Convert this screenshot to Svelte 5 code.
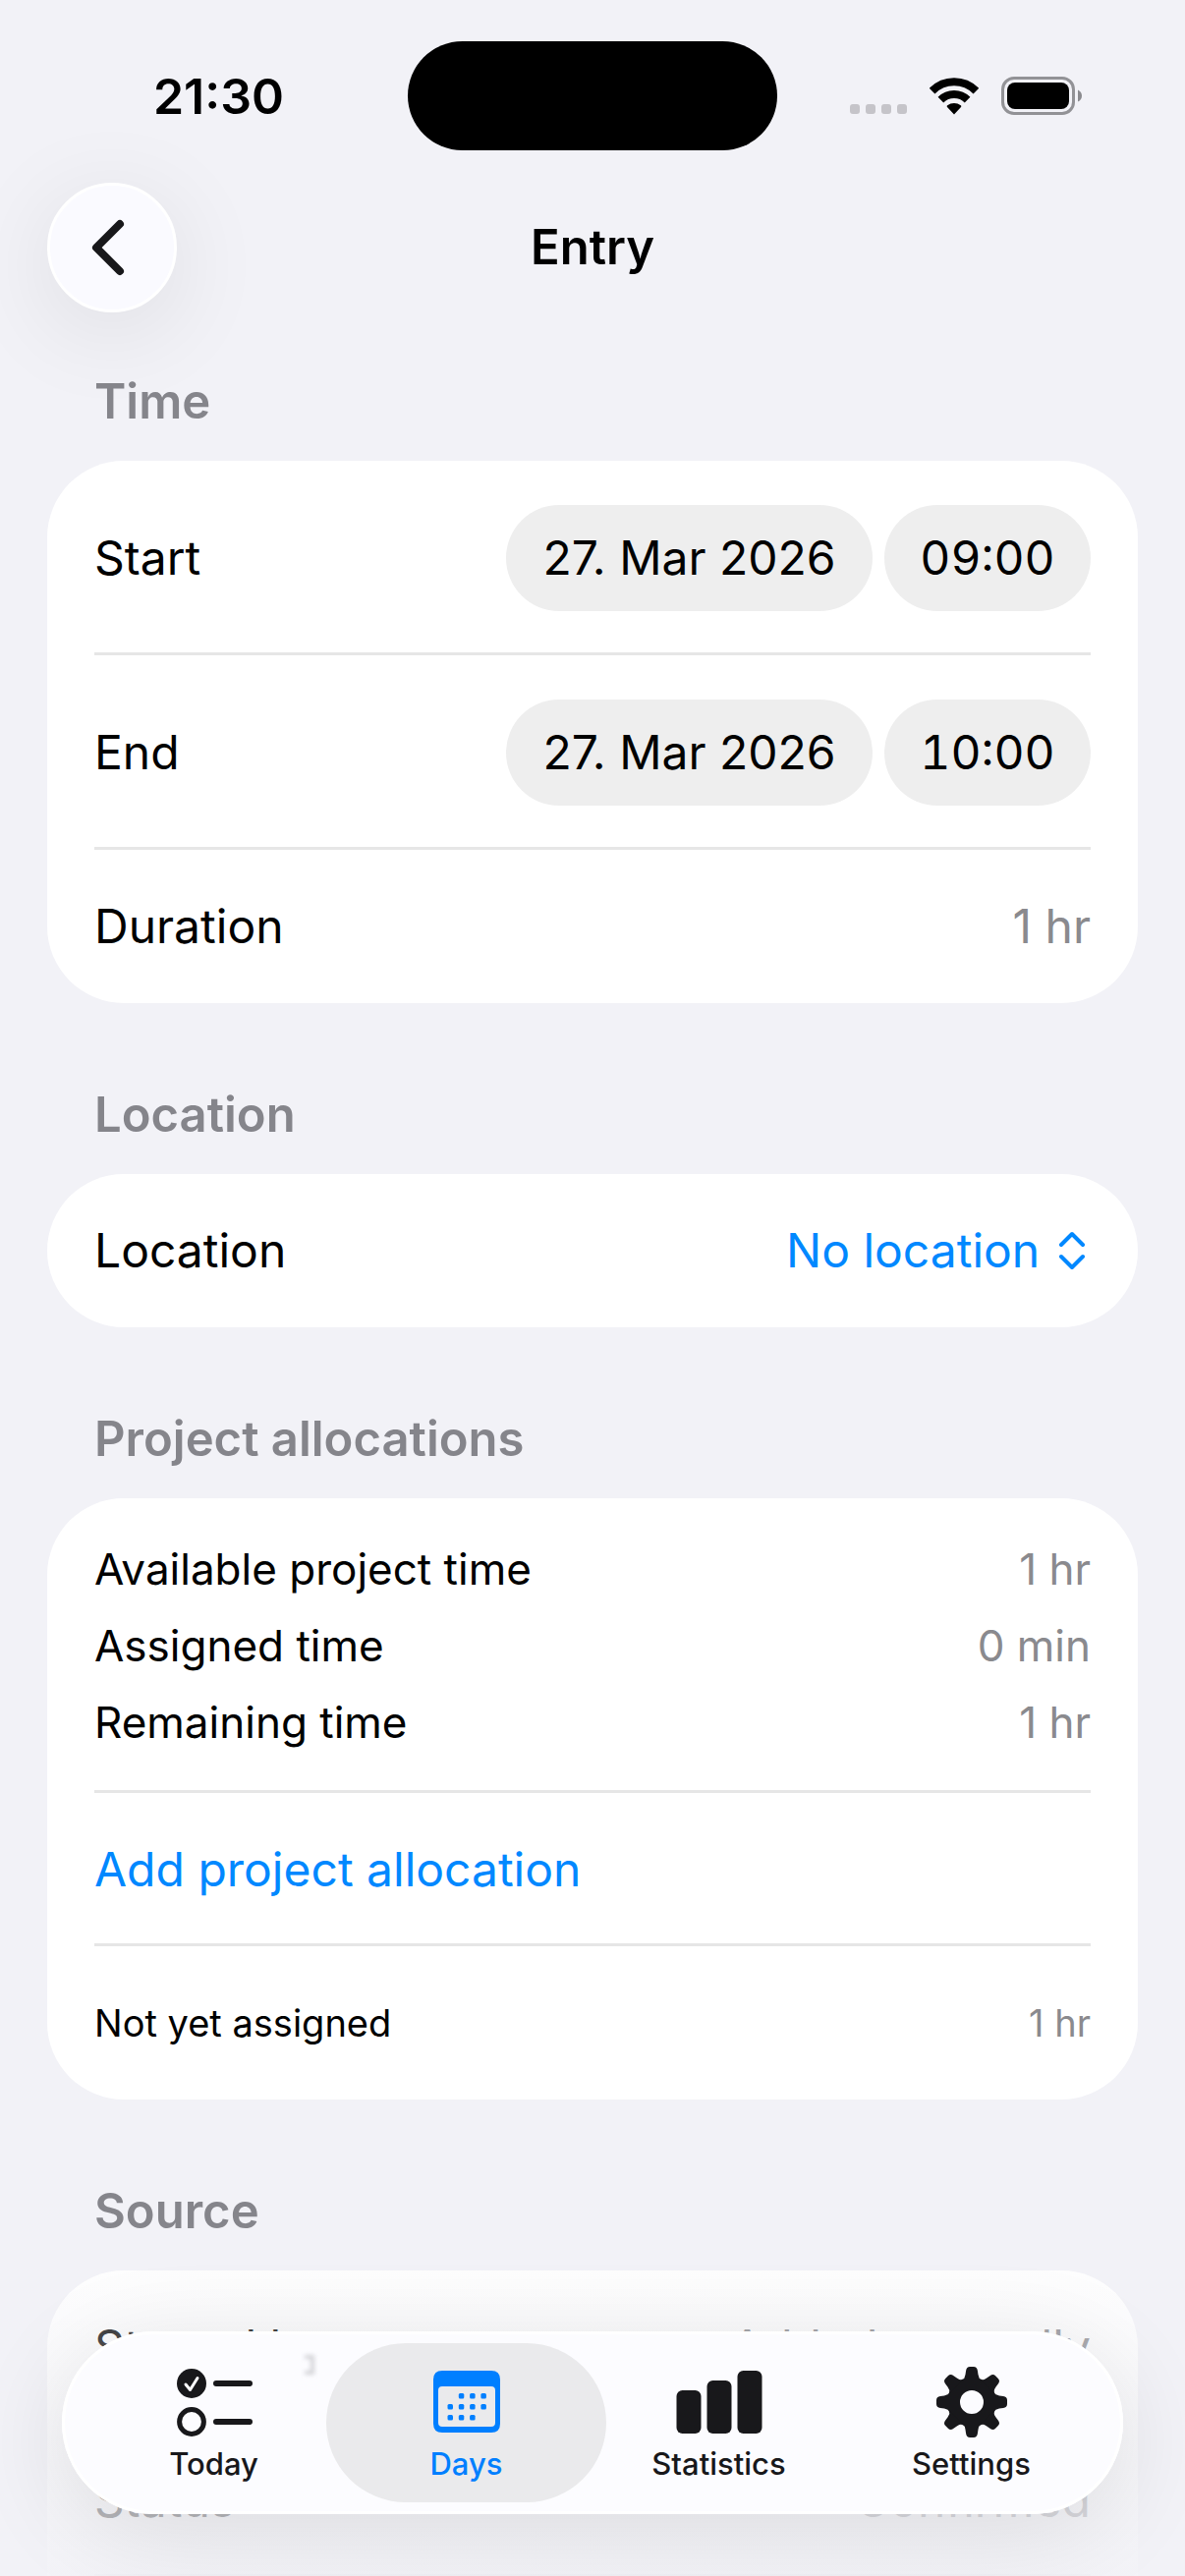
<script lang="ts">
  interface Tab {
    id: string;
    label: string;
  }

  const tabs: Tab[] = [
    { id: 'today', label: 'Today' },
    { id: 'days', label: 'Days' },
    { id: 'statistics', label: 'Statistics' },
    { id: 'settings', label: 'Settings' }
  ];

  const times = [
    { label: 'Start', date: '27. Mar 2026', time: '09:00' },
    { label: 'End', date: '27. Mar 2026', time: '10:00' }
  ];

  const totals = [
    { label: 'Available project time', value: '1 hr' },
    { label: 'Assigned time', value: '0 min' },
    { label: 'Remaining time', value: '1 hr' }
  ];

  // calendar day dots as [column, row]
  const days = [
    [1, 0], [2, 0], [3, 0],
    [0, 1], [1, 1], [2, 1], [3, 1],
    [0, 2], [1, 2], [2, 2]
  ];

  const teeth = [0, 45, 90, 135, 180, 225, 270, 315];

  let activeTab = $state('days');
  let location = $state('none');
</script>

<div class="screen">
  <header>
    <div class="status">
      <span class="status__time">21:30</span>
      <span class="status__island"></span>
      <div class="status__icons">
        <svg class="signal" viewBox="0 0 58 10" aria-hidden="true">
          {#each [0, 16, 32, 48] as x}
            <rect {x} y="0" width="10" height="10" rx="3" />
          {/each}
        </svg>
        <svg class="wifi" viewBox="0 0 50 38" aria-hidden="true">
          <path d="M2.6 13.6a31.5 31.5 0 0 1 44.8 0" />
          <path d="M11.4 22.6a19.2 19.2 0 0 1 27.2 0" />
          <path class="wifi__dot" d="M25 37.5l-7-7.4q-.9-1 .2-1.8a11 11 0 0 1 13.6 0q1.1.8.2 1.8z" />
        </svg>
        <svg class="battery" viewBox="0 0 82 39" aria-hidden="true">
          <rect class="battery__case" x="1.5" y="1.5" width="72" height="36" rx="11.5" />
          <rect x="6" y="6" width="63" height="27" rx="8" />
          <path class="battery__tip" d="M78 13.5q4 2 4 6t-4 6z" />
        </svg>
      </div>
    </div>

    <div class="navbar">
      <button class="back" type="button" aria-label="Back">
        <svg viewBox="0 0 34 58" aria-hidden="true"><path d="M29 5 5 29l24 24" /></svg>
      </button>
      <h1>Entry</h1>
    </div>
  </header>

  <main>
    <section>
      <h2>Time</h2>
      <div class="card">
        {#each times as item}
          <div class="row row--tall">
            <span>{item.label}</span>
            <div class="pills">
              <button class="pill pill--date" type="button">{item.date}</button>
              <button class="pill pill--time" type="button">{item.time}</button>
            </div>
          </div>
        {/each}
        <div class="row">
          <span>Duration</span>
          <span class="value">1 hr</span>
        </div>
      </div>
    </section>

    <section>
      <h2>Location</h2>
      <div class="card">
        <div class="row">
          <label for="location">Location</label>
          <div class="picker">
            <select id="location" bind:value={location}>
              <option value="none">No location</option>
            </select>
            <svg viewBox="0 0 28 40" aria-hidden="true">
              <path d="M3 14 14 3l11 11M3 26l11 11 11-11" />
            </svg>
          </div>
        </div>
      </div>
    </section>

    <section>
      <h2>Project allocations</h2>
      <div class="card">
        <div class="totals">
          {#each totals as total}
            <div class="total">
              <span>{total.label}</span>
              <span class="value">{total.value}</span>
            </div>
          {/each}
        </div>
        <div class="row">
          <button class="link" type="button">Add project allocation</button>
        </div>
        <div class="row row--small">
          <span>Not yet assigned</span>
          <span class="value">1 hr</span>
        </div>
      </div>
    </section>

    <section>
      <h2>Source</h2>
      <div class="card card--open">
        <div class="row">
          <span>Started by</span>
          <span class="value">Added manually</span>
        </div>
        <div class="row">
          <span>Status</span>
          <span class="value">Confirmed</span>
        </div>
      </div>
    </section>
  </main>

  <div class="scrim"></div>

  <nav class="tabs">
    {#each tabs as tab}
      <button
        type="button"
        class="tab"
        class:tab--active={activeTab === tab.id}
        aria-current={activeTab === tab.id ? 'page' : undefined}
        onclick={() => (activeTab = tab.id)}
      >
        <svg class="tab__icon" viewBox="0 0 88 72" aria-hidden="true">
          {#if tab.id === 'today'}
            <circle cx="21" cy="17" r="15" />
            <path class="check" d="M15 18l4.5 5.500 7.500-12" />
            <circle class="outline" cx="21" cy="56" r="12.4" />
            <rect x="43" y="14" width="40" height="6" rx="3" />
            <rect x="43" y="53" width="40" height="6" rx="3" />
          {:else if tab.id === 'days'}
            <path
              fill-rule="evenodd"
              d="M19 4h50q9 0 9 9v45q0 9-9 9h-50q-9 0-9-9v-45q0-9 9-9zM19 20q-4 0-4 4v33q0 4 4 4h50q4 0 4-4v-33q0-4-4-4z"
            />
            {#each days as [col, row]}
              <rect x={24.5 + col * 11.3} y={27 + row * 11} width="5.5" height="5.5" rx="1.5" />
            {/each}
          {:else if tab.id === 'statistics'}
            <rect x="0.5" y="24" width="25" height="44" rx="6" />
            <rect x="31.5" y="14" width="25" height="54" rx="6" />
            <rect x="62.5" y="4" width="25" height="64" rx="6" />
          {:else}
            <circle class="gear" cx="44" cy="36" r="18.5" />
            {#each teeth as angle}
              <path
                d="M34 14q3-2 3.5-6l.6-4q.6-4 4-4h3.800q3.400 0 4 4l.6 4q.5 4 3.500 6z"
                transform="rotate({angle} 44 36)"
              />
            {/each}
          {/if}
        </svg>
        <span>{tab.label}</span>
      </button>
    {/each}
  </nav>
</div>

<style>
  :global(body) {
    background: #f2f2f7;
  }

  .screen {
    position: relative;
    display: flex;
    flex-direction: column;
    height: 100vh;
    overflow: hidden;
    background: #f2f2f7;
    color: #000;
    font-family: Inter, 'Liberation Sans', sans-serif;
    font-size: 48px;
    line-height: 66px;
  }

  button,
  select {
    padding: 0;
    border: 0;
    background: none;
    color: inherit;
    font: inherit;
    cursor: pointer;
  }

  h1,
  h2 {
    margin: 0;
    font-size: 49px;
    font-weight: 600;
  }

  /* Status bar */
  .status {
    display: grid;
    grid-template-columns: 1fr 376px 1fr;
    align-items: center;
    padding-top: 42px;
  }

  .status__time {
    padding-left: 30px;
    font-size: 50px;
    font-weight: 600;
    text-align: center;
  }

  .status__island {
    height: 111px;
    border-radius: 56px;
    background: #000;
  }

  .status__icons {
    display: flex;
    align-items: center;
    gap: 23px;
    padding-left: 74px;
  }

  .signal {
    width: 58px;
    height: 10px;
    margin-top: 27px;
    fill: #c5c4c9;
  }

  .wifi {
    width: 50px;
    height: 38px;
  }

  .wifi path {
    fill: none;
    stroke: #000;
    stroke-width: 8;
  }

  .wifi .wifi__dot {
    fill: #000;
    stroke: none;
  }

  .battery {
    width: 82px;
    height: 39px;
  }

  .battery .battery__case {
    fill: none;
    stroke: #929296;
    stroke-width: 3;
  }

  .battery__tip {
    fill: #8a8a8e;
  }

  /* Navigation bar */
  .navbar {
    display: grid;
    grid-template-columns: 132px 1fr 132px;
    align-items: center;
    padding: 33px 48px 0;
    text-align: center;
  }

  .back {
    display: flex;
    align-items: center;
    justify-content: center;
    width: 132px;
    height: 132px;
    border: 3px solid #fff;
    border-radius: 50%;
    background: #fafaff;
    box-shadow: 0 18px 100px rgba(0, 0, 0, 0.09);
  }

  .back svg {
    width: 34px;
    height: 58px;
    margin-right: 9px;
    fill: none;
    stroke: #18181b;
    stroke-width: 8;
    stroke-linecap: round;
    stroke-linejoin: round;
  }

  /* Form */
  main {
    flex: 1;
    min-height: 0;
    padding: 0 48px;
  }

  section {
    padding-top: 81px;
  }

  section:first-child {
    padding-top: 58px;
  }

  h2 {
    padding: 0 48px 27px;
    color: #85858b;
  }

  .card {
    padding: 0 48px;
    border-radius: 78px;
    background: #fff;
  }

  .card--open {
    padding-bottom: 156px;
  }

  .row {
    display: flex;
    align-items: center;
    justify-content: space-between;
    min-height: 156px;
    box-shadow: inset 0 -3px #e6e6e6;
  }

  .card:not(.card--open) .row:last-child {
    box-shadow: none;
  }

  .row--tall {
    min-height: 198px;
  }

  .row--small {
    font-size: 38px;
  }

  .value {
    color: #8a8a8e;
  }

  .pills {
    display: flex;
    gap: 12px;
  }

  .pill {
    height: 108px;
    border-radius: 54px;
    background: #eee;
  }

  .pill--date {
    min-width: 373px;
  }

  .pill--time {
    min-width: 210px;
    font-variant-numeric: tabular-nums;
  }

  .picker {
    display: flex;
    align-items: center;
    gap: 18px;
    padding-right: 5px;
    color: #0088ff;
  }

  select {
    appearance: none;
  }

  .picker svg {
    width: 28px;
    height: 40px;
    fill: none;
    stroke: currentColor;
    stroke-width: 4;
    stroke-linecap: round;
    stroke-linejoin: round;
  }

  .totals {
    display: flex;
    flex-direction: column;
    gap: 18px;
    padding: 42px 0;
    box-shadow: inset 0 -3px #e6e6e6;
    font-size: 44px;
    line-height: 60px;
  }

  .total {
    display: flex;
    justify-content: space-between;
  }

  .link {
    color: #0088ff;
  }

  /* Content fades out below the tab bar */
  .scrim {
    position: absolute;
    right: 0;
    bottom: 0;
    left: 0;
    height: 360px;
    background: linear-gradient(rgba(242, 242, 247, 0), rgba(242, 242, 247, 0.9));
    pointer-events: none;
  }

  /* Tab bar */
  .tabs {
    position: absolute;
    right: 63px;
    bottom: 63px;
    left: 63px;
    display: flex;
    box-sizing: border-box;
    padding: 12px 26px;
    border-radius: 93px;
    background: #fcfcff;
    box-shadow:
      inset 0 0 0 3px #fff,
      0 18px 100px rgba(0, 0, 0, 0.11);
  }

  /* Faint refraction in the glass */
  .tabs::before {
    position: absolute;
    top: 24px;
    left: 247px;
    width: 6px;
    height: 12px;
    border: 4px solid #d4d4d8;
    border-left: 0;
    filter: blur(2px);
    content: '';
  }

  .tab {
    display: flex;
    flex: 1;
    flex-direction: column;
    align-items: center;
    gap: 9px;
    margin: 0 -14px;
    padding: 24px 0 21px;
    border-radius: 81px;
    color: #18181b;
    font-size: 31px;
    font-weight: 500;
    line-height: 36px;
  }

  .tab--active {
    background: #eaeaec;
    color: #007fff;
  }

  .tab__icon {
    width: 88px;
    height: 72px;
    fill: currentColor;
  }

  .check {
    fill: none;
    stroke: #fcfcff;
    stroke-width: 3;
    stroke-linecap: round;
    stroke-linejoin: round;
  }

  .outline {
    fill: none;
    stroke: currentColor;
    stroke-width: 5;
  }

  .gear {
    fill: none;
    stroke: currentColor;
    stroke-width: 13;
  }
</style>
